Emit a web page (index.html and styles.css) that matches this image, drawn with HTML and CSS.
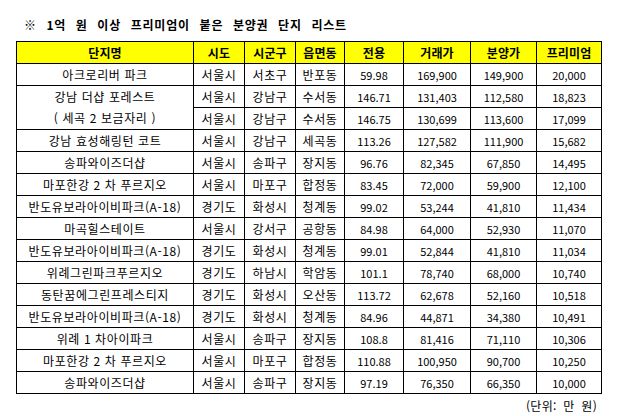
FILE: index.html
```html
<!DOCTYPE html>
<html lang="ko">
<head>
<meta charset="utf-8">
<link rel="stylesheet" href="styles.css">
</head>
<body>
<div class="page">
  <h1 class="title">※ 1억 원 이상 프리미엄이 붙은 분양권 단지 리스트</h1>
  <table class="grid">
    <colgroup>
      <col class="c-name"><col class="c-sm"><col class="c-sm"><col class="c-dong">
      <col class="c-area"><col class="c-price"><col class="c-sale"><col class="c-prem">
    </colgroup>
    <thead>
      <tr><th>단지명</th><th>시도</th><th>시군구</th><th>읍면동</th><th>전용</th><th>거래가</th><th>분양가</th><th>프리미엄</th></tr>
    </thead>
    <tbody>
      <tr><td>아크로리버 파크</td><td>서울시</td><td>서초구</td><td>반포동</td><td class="num">59.98</td><td class="num">169,900</td><td class="num">149,900</td><td class="num">20,000</td></tr>
      <tr><td class="open-bottom">강남 더샵 포레스트</td><td>서울시</td><td>강남구</td><td>수서동</td><td class="num">146.71</td><td class="num">131,403</td><td class="num">112,580</td><td class="num">18,823</td></tr>
      <tr><td class="open-top">( 세곡 2 보금자리 )</td><td>서울시</td><td>강남구</td><td>수서동</td><td class="num">146.75</td><td class="num">130,699</td><td class="num">113,600</td><td class="num">17,099</td></tr>
      <tr><td>강남 효성해링턴 코트</td><td>서울시</td><td>강남구</td><td>세곡동</td><td class="num">113.26</td><td class="num">127,582</td><td class="num">111,900</td><td class="num">15,682</td></tr>
      <tr><td>송파와이즈더샵</td><td>서울시</td><td>송파구</td><td>장지동</td><td class="num">96.76</td><td class="num">82,345</td><td class="num">67,850</td><td class="num">14,495</td></tr>
      <tr><td>마포한강 2 차 푸르지오</td><td>서울시</td><td>마포구</td><td>합정동</td><td class="num">83.45</td><td class="num">72,000</td><td class="num">59,900</td><td class="num">12,100</td></tr>
      <tr><td>반도유보라아이비파크(A-18)</td><td>경기도</td><td>화성시</td><td>청계동</td><td class="num">99.02</td><td class="num">53,244</td><td class="num">41,810</td><td class="num">11,434</td></tr>
      <tr><td>마곡힐스테이트</td><td>서울시</td><td>강서구</td><td>공항동</td><td class="num">84.98</td><td class="num">64,000</td><td class="num">52,930</td><td class="num">11,070</td></tr>
      <tr><td>반도유보라아이비파크(A-18)</td><td>경기도</td><td>화성시</td><td>청계동</td><td class="num">99.01</td><td class="num">52,844</td><td class="num">41,810</td><td class="num">11,034</td></tr>
      <tr><td>위례그린파크푸르지오</td><td>경기도</td><td>하남시</td><td>학암동</td><td class="num">101.1</td><td class="num">78,740</td><td class="num">68,000</td><td class="num">10,740</td></tr>
      <tr><td>동탄꿈에그린프레스티지</td><td>경기도</td><td>화성시</td><td>오산동</td><td class="num">113.72</td><td class="num">62,678</td><td class="num">52,160</td><td class="num">10,518</td></tr>
      <tr><td>반도유보라아이비파크(A-18)</td><td>경기도</td><td>화성시</td><td>청계동</td><td class="num">84.96</td><td class="num">44,871</td><td class="num">34,380</td><td class="num">10,491</td></tr>
      <tr><td>위례 1 차아이파크</td><td>서울시</td><td>송파구</td><td>장지동</td><td class="num">108.8</td><td class="num">81,416</td><td class="num">71,110</td><td class="num">10,306</td></tr>
      <tr><td>마포한강 2 차 푸르지오</td><td>서울시</td><td>마포구</td><td>합정동</td><td class="num">110.88</td><td class="num">100,950</td><td class="num">90,700</td><td class="num">10,250</td></tr>
      <tr><td>송파와이즈더샵</td><td>서울시</td><td>송파구</td><td>장지동</td><td class="num">97.19</td><td class="num">76,350</td><td class="num">66,350</td><td class="num">10,000</td></tr>
    </tbody>
  </table>
  <p class="unit">(단위: 만 원)</p>
</div>
</body>
</html>
```

FILE: styles.css
```css
* { box-sizing: border-box; }
html, body { margin: 0; padding: 0; background: #ffffff; }
body {
  font-family: "Noto Sans CJK KR", "Noto Sans", sans-serif;
  color: #000000;
}
.page {
  width: 621px;
  height: 416px;
  padding-top: 15px;
}
.title {
  margin: 0 0 0 24px;
  height: 26px;
  font-size: 12px;
  font-weight: 700;
  letter-spacing: 0.8px;
  word-spacing: 5.5px;
  line-height: 19px;
}
.grid {
  margin-left: 16px;
  border-collapse: collapse;
  table-layout: fixed;
  width: 586px;
  font-size: 12px;
}
.c-name { width: 177px; }
.c-sm { width: 51px; }
.c-dong { width: 49px; }
.c-area { width: 59px; }
.c-price { width: 67px; }
.c-sale { width: 66px; }
.c-prem { width: 65px; }
.grid th, .grid td {
  border: 1px solid #000000;
  height: 22px;
  padding: 0;
  text-align: center;
  vertical-align: middle;
  line-height: 20px;
  white-space: nowrap;
  overflow: hidden;
}
.grid th {
  background: #ffff00;
  font-weight: 700;
  letter-spacing: 0.1px;
}
.grid td {
  font-weight: 400;
  letter-spacing: 0.6px;
}
.grid td.num {
  font-size: 11px;
  letter-spacing: 0;
}
.grid td.open-bottom { border-bottom: none; }
.grid td.open-top { border-top: none; }
.unit {
  margin: 4px 24px 0 0;
  text-align: right;
  font-size: 12px;
  line-height: 16px;
  letter-spacing: 0.3px;
  word-spacing: 3px;
}
```
